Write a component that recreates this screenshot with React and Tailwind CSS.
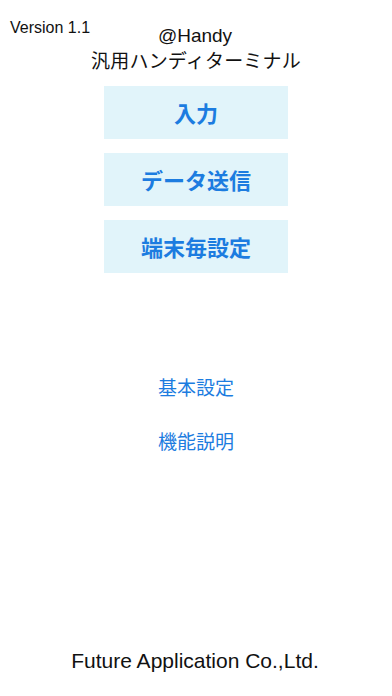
const jp = { fontFamily: '"Noto Sans CJK JP", "Liberation Sans", sans-serif' }
const lat = { fontFamily: '"Liberation Sans", "Noto Sans CJK JP", sans-serif' }

function MenuButton({ label }) {
  return (
    <button className="w-[184px] h-[53px] bg-[#e1f4fa] text-[#1c7ce0] text-[22px] font-bold flex items-center justify-center" style={jp}>
      {label}
    </button>
  )
}

export default function App() {
  return (
    <div className="relative w-[392px] h-[696px] bg-white flex flex-col items-center" style={lat}>
      <span className="absolute left-[10px] top-[16px] text-[16px] text-[#111]">Version 1.1</span>

      <div className="pt-[24px] flex flex-col items-center text-[#111] leading-[24px]">
        <span className="text-[19px] -translate-x-[1px]">@Handy</span>
        <span className="text-[19px] tracking-[0.2px]" style={jp}>汎用ハンディターミナル</span>
      </div>

      <div className="mt-[14px] flex flex-col gap-[14px]">
        <MenuButton label="入力" />
        <MenuButton label="データ送信" />
        <MenuButton label="端末毎設定" />
      </div>

      <div className="mt-[102px] flex flex-col items-center gap-[30px] text-[19px] text-[#1c7ce0] leading-[24px]" style={jp}>
        <span>基本設定</span>
        <span>機能説明</span>
      </div>

      <div className="mt-auto pb-[20px] text-[21px] text-[#111] -translate-x-[1px]">Future Application Co.,Ltd.</div>
    </div>
  )
}
